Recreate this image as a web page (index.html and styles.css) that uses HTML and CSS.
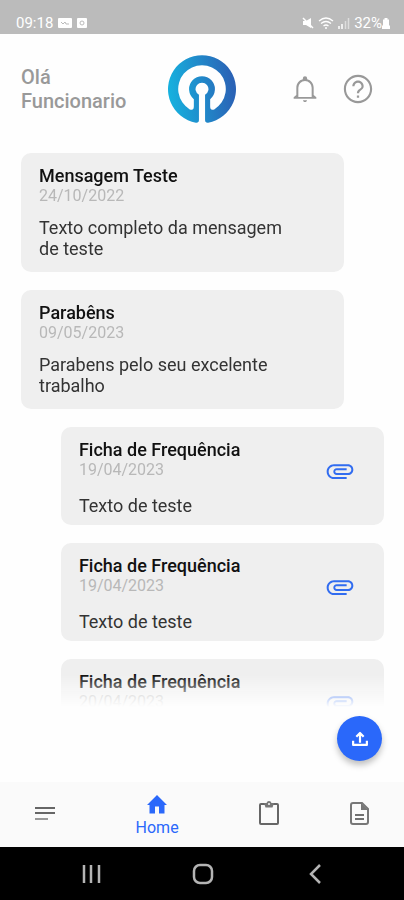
FILE: index.html
```html
<!DOCTYPE html>
<html lang="pt-BR">
<head>
  <meta charset="UTF-8">
  <meta name="viewport" content="width=device-width, initial-scale=1">
  <title>Home</title>
  <link rel="stylesheet" href="styles.css">
</head>

<body>
<div class="status">
    <span class="status-group">
        <span>09:18</span>
        <svg width="14" height="12" viewBox="0 0 14 12"><rect y="1" width="14" height="10" rx="1" fill="#fff"/><path d="M3 5l2 2 2-2 1 2h3" fill="none" stroke="#bbb"/></svg>
        <svg width="10" height="12" viewBox="0 0 10 12"><rect y="1" width="10" height="10" rx="1" fill="#fff"/><circle cx="5" cy="6" r="2" fill="none" stroke="#bbb"/></svg>
    </span>
    <span class="status-group status-right">
        <svg width="12" height="12" viewBox="0 0 12 12"><path d="M1 4h3l5-3v10L4 8H1z" fill="#fff"/><path d="M1 1l10 10" stroke="#fff" stroke-width="1.5"/></svg>
        <svg width="16" height="12" viewBox="0 0 16 12"><path d="M1 4q7-6 14 0M3 6.500q5-4 10 0M5.500 9q2.500-2 5 0" fill="none" stroke="#fff" stroke-width="1.300"/><circle cx="8" cy="11" r="1" fill="#fff"/></svg>
        <svg width="12" height="12" viewBox="0 0 12 12"><path d="M1 9v3M4 7v5" stroke="#fff" stroke-width="1.500"/><path d="M7.500 4v8M10.500 1v11" stroke="#fff" stroke-opacity=".5" stroke-width="1.500"/></svg>
        <span class="battery">32%<svg width="8" height="12" viewBox="0 0 8 12"><path d="M2.500 1h3v1.500H7V8l1 1v3H0V9l1-1V2.500h1.500z" fill="#fff"/></svg></span>
    </span>
</div>

<header class="header">
    <h1 class="greeting">Olá<br>Funcionario</h1>
    <svg class="logo" viewBox="0 0 200 200" role="img" aria-label="Logo">
        <defs>
            <linearGradient id="brand" gradientUnits="userSpaceOnUse" x1="0" y1="110" x2="190" y2="90">
                <stop offset="0" stop-color="#16b2df"/>
                <stop offset="1" stop-color="#2a63b6"/>
            </linearGradient>
        </defs>
        <path fill="url(#brand)" fill-rule="evenodd" d="M91 191Q91 200 82 199A100 100 0 1 1 118 199Q109 200 109 191V117A19 19 0 1 0 91 117ZM76 151Q76 165 64 160A70 70 0 1 1 136 160Q124 165 124 151V130A38 38 0 1 0 76 130Z"/>
    </svg>
    <div class="header-actions">
        <button class="icon-button" aria-label="Notificações">
            <svg width="32" height="32" viewBox="0 0 24 24"><path fill="#999" d="M10.500 20.500h3c0 1-.7 1.300-1.500 1.300s-1.500-.3-1.500-1.300zM20.500 18.200v1.200h-17v-1.200l2-1.700V11c0-3.100 2.030-5.600 4.900-6.300V4a1.600 1.600 0 0 1 3.200 0v.7c2.870.7 4.900 3.200 4.900 6.300v5.500zM17 11a5 5 0 0 0-10 0v7h10z"/></svg>
        </button>
        <button class="icon-button" aria-label="Ajuda">
            <svg width="34" height="34" viewBox="0 0 24 24"><path fill="#999" d="M11.200 16.500h1.600v1.600h-1.600v-1.600zM12 2C6.480 2 2 6.480 2 12s4.480 10 10 10 10-4.480 10-10S17.520 2 12 2zm0 18.500c-4.690 0-8.500-3.810-8.500-8.500S7.310 3.500 12 3.500s8.500 3.810 8.500 8.500-3.810 8.500-8.500 8.500zM12 6c-2.210 0-4 1.790-4 4h1.500c0-1.400 1.100-2.500 2.500-2.500s2.500 1.100 2.500 2.500c0 2-3.300 1.750-3.300 5h1.600c0-2.250 3.200-2.500 3.200-5 0-2.210-1.790-4-4-4z"/></svg>
        </button>
    </div>
</header>

<main class="feed">
    <article class="card">
        <h2>Mensagem Teste</h2>
        <time>24/10/2022</time>
        <p>Texto completo da mensagem de teste</p>
    </article>
    <article class="card">
        <h2>Parabêns</h2>
        <time>09/05/2023</time>
        <p>Parabens pelo seu excelente trabalho</p>
    </article>
    <article class="card card-file">
        <div>
            <h2>Ficha de Frequência</h2>
            <time>19/04/2023</time>
            <p>Texto de teste</p>
        </div>
        <button class="icon-button" aria-label="Abrir anexo">
            <svg width="32" height="32" viewBox="0 0 24 24"><use href="#clip"/></svg>
        </button>
    </article>
    <article class="card card-file">
        <div>
            <h2>Ficha de Frequência</h2>
            <time>19/04/2023</time>
            <p>Texto de teste</p>
        </div>
        <button class="icon-button" aria-label="Abrir anexo">
            <svg width="32" height="32" viewBox="0 0 24 24"><use href="#clip"/></svg>
        </button>
    </article>
    <article class="card card-file">
        <div>
            <h2>Ficha de Frequência</h2>
            <time>20/04/2023</time>
        </div>
        <button class="icon-button" aria-label="Abrir anexo">
            <svg width="32" height="32" viewBox="0 0 24 24"><use href="#clip"/></svg>
        </button>
    </article>
</main>

<div class="upload">
    <button class="fab" aria-label="Enviar arquivo">
        <svg width="22" height="22" viewBox="0 0 24 24"><path d="M12 16V6M8 9.500L12 5.500l4 4M4.500 14v4.500h15V14" fill="none" stroke="#fff" stroke-width="2.400" stroke-linejoin="round"/></svg>
    </button>
</div>

<nav class="tabs">
    <a href="#menu" class="tab" aria-label="Menu">
        <svg width="28" height="28" viewBox="0 0 28 28"><path d="M4 9h20M4 14h20" stroke="#666" stroke-width="2"/><path d="M4 20h13" stroke="#999" stroke-width="2"/></svg>
    </a>
    <a href="#home" class="tab active">
        <svg width="24" height="24" viewBox="0 0 24 24"><path fill="#2a68fa" d="M10 21.500v-7h4v7h5.500V13H22L12 3 2 13h2.500v8.500z"/></svg>
        <span>Home</span>
    </a>
    <a href="#tarefas" class="tab" aria-label="Tarefas">
        <svg width="28" height="28" viewBox="0 0 28 28"><rect x="5" y="5" width="18" height="20" rx="1" fill="none" stroke="#666" stroke-width="2"/><path fill="#777" d="M9 4h2.500a2.600 2.600 0 0 1 5 0H19l-1.500 4.500h-7z"/><circle cx="14" cy="5" r="1" fill="#fafafa"/></svg>
    </a>
    <a href="#documentos" class="tab" aria-label="Documentos">
        <svg width="28" height="28" viewBox="0 0 28 28"><path d="M8 4h9l6 6v13a2 2 0 0 1-2 2H8a2 2 0 0 1-2-2V6a2 2 0 0 1 2-2z" fill="none" stroke="#777" stroke-width="2"/><path d="M16 4l7 7h-7z" fill="#777"/><path d="M10 16h9M10 20h9" stroke="#707070" stroke-width="2"/></svg>
    </a>
</nav>

<div class="system-nav">
    <button class="icon-button" aria-label="Recentes">
        <svg width="24" height="24" viewBox="0 0 24 24"><path d="M5 3v18M12 3v18M20 3v18" stroke="#b4b4b4" stroke-width="2.500"/></svg>
    </button>
    <button class="icon-button" aria-label="Início">
        <svg width="24" height="24" viewBox="0 0 24 24"><rect x="3" y="3" width="18" height="18" rx="6" fill="none" stroke="#b4b4b4" stroke-width="2.500"/></svg>
    </button>
    <button class="icon-button" aria-label="Voltar">
        <svg width="24" height="24" viewBox="0 0 24 24"><path d="M17 3L8 12l9 9" fill="none" stroke="#b4b4b4" stroke-width="2.500"/></svg>
    </button>
</div>

<svg class="symbols" aria-hidden="true">
    <symbol id="clip" viewBox="0 0 24 24"><path fill="#316cf0" d="M2 12.500C2 9.460 4.460 7 7.500 7H18c2.210 0 4 1.790 4 4s-1.790 4-4 4H9.500C8.120 15 7 13.880 7 12.500S8.120 10 9.500 10H17v1.500H9.410c-1.300 0-1.300 2 0 2H18c1.400 0 2.500-1.100 2.500-2.500S19.400 8.500 18 8.500H7.500c-2.200 0-4 1.800-4 4s1.800 4 4 4H17V18H7.500C4.460 18 2 15.540 2 12.500z"/></symbol>
</svg>
</body>
</html>
```
FILE: styles.css
```css
* {
    box-sizing: border-box;
}
body {
    margin: 0;
    height: 100vh;
    display: flex;
    flex-direction: column;
    background: #fefefe;
    font-family: Roboto, sans-serif;
    color: #333;
}
h1, h2, p {
    margin: 0;
}
svg {
    display: block;
    flex: none;
}
.icon-button {
    padding: 0;
    border: 0;
    background: none;
}
.symbols {
    display: none;
}

/* status bar */
.status {
    display: flex;
    justify-content: space-between;
    align-items: flex-end;
    height: 34px;
    padding: 0 14px 2px 16px;
    background: #bbb;
    color: #fff;
    font-size: 15px;
    line-height: 18px;
}
.status-group {
    display: flex;
    align-items: center;
    gap: 5px;
}
.status-right {
    gap: 4px;
}
.battery {
    display: flex;
    align-items: center;
}

/* header */
.header {
    display: grid;
    grid-template-columns: 1fr 68px 1fr;
    align-items: center;
    height: 109px;
    padding: 0 21px;
}
.greeting {
    color: #999;
    font-size: 20px;
    font-weight: 500;
    line-height: 24px;
}
.logo {
    width: 68px;
    height: 68px;
}
.header-actions {
    display: flex;
    justify-content: flex-end;
    align-items: center;
    gap: 20px;
    padding-right: 8px;
}

/* messages */
.feed {
    flex: 1;
    min-height: 0;
    display: flex;
    flex-direction: column;
    gap: 18px;
    padding: 10px 20px 0 21px;
    overflow: hidden;
    mask-image: linear-gradient(#000 calc(100% - 32px), transparent);
}
.card {
    flex: none;
    width: 89%;
    padding: 12px 40px 13px 18px;
    border-radius: 10px;
    background: #efefef;
}
.card h2 {
    color: #111;
    font-size: 18px;
    font-weight: 500;
    line-height: 21px;
}
.card time {
    display: block;
    color: #b8b8b8;
    font-size: 16px;
    line-height: 19px;
}
.card p {
    margin-top: 12px;
    font-size: 18px;
    line-height: 21px;
}
.card-file {
    display: flex;
    justify-content: space-between;
    align-items: flex-start;
    align-self: flex-end;
    padding-right: 28px;
    padding-bottom: 9px;
}
.card-file p {
    margin-top: 16px;
}
.card-file .icon-button {
    margin-top: 16px;
}

/* upload button */
.upload {
    display: flex;
    justify-content: flex-end;
    padding: 9px 22px 21px;
}
.fab {
    display: grid;
    place-items: center;
    width: 45px;
    height: 45px;
    padding: 0;
    border: 0;
    border-radius: 50%;
    background: #2a68fa;
    box-shadow: 0 4px 6px rgba(0, 0, 0, .25);
}

/* bottom tabs */
.tabs {
    display: flex;
    height: 65px;
    padding-bottom: 3px;
    background: #fafafa;
}
.tab {
    flex: 2;
    display: flex;
    flex-direction: column;
    justify-content: center;
    align-items: center;
    gap: 2px;
    color: #2a68fa;
    font-size: 16px;
    line-height: 20px;
    text-decoration: none;
}
.tab.active {
    flex: 3;
    padding-top: 4px;
}

/* system buttons */
.system-nav {
    display: grid;
    grid-template-columns: repeat(3, 1fr);
    place-items: center;
    height: 53px;
    padding: 0 33px 0 35px;
    background: #000;
}
```
